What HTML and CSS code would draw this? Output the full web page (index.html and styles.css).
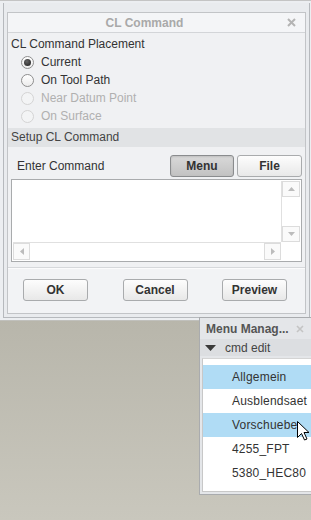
FILE: index.html
```html
<!DOCTYPE html>
<html>
<head>
<meta charset="utf-8">
<link rel="stylesheet" href="styles.css">
</head>
<body>
<div class="win">
  <div class="frame">
    <div class="dialog">
      <div class="titlebar">
        <span class="title">CL Command</span>
        <span class="close"><svg width="9" height="9" viewBox="0 0 9 9"><path d="M1 1L8 8M8 1L1 8" stroke="#b4b4b4" stroke-width="2"/></svg></span>
      </div>
      <div class="content">
        <div class="group-label">CL Command Placement</div>
        <div class="radios">
          <div class="radio checked"><span class="circle"></span>Current</div>
          <div class="radio"><span class="circle"></span>On Tool Path</div>
          <div class="radio disabled"><span class="circle"></span>Near Datum Point</div>
          <div class="radio disabled"><span class="circle"></span>On Surface</div>
        </div>
        <div class="section">Setup CL Command</div>
        <div class="cmd-row">
          <span class="cmd-label">Enter Command</span>
          <div class="cmd-btns">
            <button class="btn pressed">Menu</button>
            <button class="btn">File</button>
          </div>
        </div>
        <div class="textarea">
          <div class="ta-text"></div>
          <div class="vscroll">
            <div class="arrow-box"><svg width="7" height="4" viewBox="0 0 7 4"><path d="M0 4L3.5 0L7 4Z" fill="#bcbcbc"/></svg></div>
            <div class="track"></div>
            <div class="arrow-box"><svg width="7" height="4" viewBox="0 0 7 4"><path d="M0 0L3.5 4L7 0Z" fill="#bcbcbc"/></svg></div>
          </div>
          <div class="hscroll">
            <div class="arrow-box"><svg width="4" height="7" viewBox="0 0 4 7"><path d="M4 0L0 3.5L4 7Z" fill="#bcbcbc"/></svg></div>
            <div class="track"></div>
            <div class="arrow-box"><svg width="4" height="7" viewBox="0 0 4 7"><path d="M0 0L4 3.5L0 7Z" fill="#bcbcbc"/></svg></div>
          </div>
          <div class="corner"></div>
        </div>
      </div>
      <div class="footer">
        <button class="btn">OK</button>
        <button class="btn">Cancel</button>
        <button class="btn">Preview</button>
      </div>
    </div>
  </div>
</div>

<div class="menuwin">
  <div class="mw-title">
    <span>Menu Manag...</span>
    <svg width="8" height="8" viewBox="0 0 8 8"><path d="M1 1L7 7M7 1L1 7" stroke="#c4c4c4" stroke-width="1.6"/></svg>
  </div>
  <div class="mw-head">
    <svg width="11" height="6" viewBox="0 0 11 6"><path d="M0 0L11 0L5.5 6Z" fill="#3a3a3a"/></svg>
    <span>cmd edit</span>
  </div>
  <div class="mw-list">
    <div class="mw-item sel">Allgemein</div>
    <div class="mw-item">Ausblendsaet</div>
    <div class="mw-item sel">Vorschuebe</div>
    <div class="mw-item">4255_FPT</div>
    <div class="mw-item">5380_HEC80</div>
  </div>
</div>

<svg class="cursor" width="13" height="20" viewBox="0 0 13 20"><path d="M0.5 0.5L0.5 16.5L4.5 12.5L7.5 19L10 18L7 11.5L12 11.5Z" fill="#fff" stroke="#000" stroke-width="1" stroke-linejoin="miter"/></svg>
</body>
</html>
```

FILE: styles.css
```css
* { box-sizing: border-box; }
html, body { margin: 0; padding: 0; }
body {
  width: 311px;
  height: 520px;
  overflow: hidden;
  position: relative;
  font-family: "Liberation Sans", Arial, sans-serif;
  font-size: 12px;
  color: #333;
  background: linear-gradient(#b8b6ab 320px, #c9c7bd 520px);
}
.win {
  background: #eceef1;
  border-top: 1px solid #c4c4c4;
  border-bottom: 1px solid #c0c0bc;
  padding: 2px 1px 2px 3px;
}
.frame {
  border-left: 1px solid #b6b9bd;
  border-right: 1px solid #b6b9bd;
  border-bottom: 1px solid #b6b9bd;
  padding: 9px 3px 3px 3px;
  background: #e9ebee;
}
.dialog {
  border: 1px solid #c2c4c7;
  background: #f0f1f3;
  height: 302px;
  display: flex;
  flex-direction: column;
}
.titlebar {
  height: 20px;
  border-bottom: 1px solid #d3d5d8;
  background: #f4f5f7;
  display: flex;
  align-items: center;
}
.title {
  flex: 1;
  text-align: center;
  font-weight: bold;
  color: #a9a9a9;
  font-size: 12px;
  padding-left: 2px;
}
.close {
  width: 26px;
  display: flex;
  justify-content: center;
  padding-right: 2px;
}
.content {
  padding: 2px 3px 5px 3px;
}
.group-label {
  height: 18px;
  line-height: 18px;
  color: #333;
}
.radio {
  height: 18px;
  display: flex;
  align-items: center;
  color: #333;
}
.circle {
  width: 13px;
  height: 13px;
  border-radius: 50%;
  border: 1px solid #8e8e8e;
  background: linear-gradient(#ffffff, #ececec);
  margin-left: 10px;
  margin-right: 7px;
  display: flex;
  align-items: center;
  justify-content: center;
}
.radio.checked .circle::after {
  content: "";
  width: 7px;
  height: 7px;
  border-radius: 50%;
  background: radial-gradient(circle at 40% 35%, #666, #1a1a1a);
}
.radio.disabled { color: #b0b0b0; }
.radio.disabled .circle {
  border-color: #d4d4d4;
  background: #f3f4f5;
}
.section {
  margin: 3px -3px 0 -3px;
  height: 19px;
  line-height: 19px;
  padding-left: 3px;
  background: #e1e3e5;
  color: #444;
}
.cmd-row {
  margin-top: 8px;
  height: 22px;
  display: flex;
  align-items: center;
  justify-content: space-between;
}
.cmd-label {
  padding-left: 6px;
  color: #333;
}
.cmd-btns {
  display: flex;
  gap: 3px;
}
.btn {
  font-family: "Liberation Sans", Arial, sans-serif;
  font-size: 12px;
  font-weight: bold;
  color: #333;
  height: 22px;
  width: 65px;
  padding: 0;
  border: 1px solid #a9abad;
  border-radius: 3px;
  background: linear-gradient(#fdfdfd, #e8e8e8);
}
.btn.pressed {
  width: 64px;
  border-color: #8a8c8e;
  background: linear-gradient(#d9d9d9, #c2c2c2);
  box-shadow: inset 0 1px 2px rgba(0,0,0,0.12);
}
.textarea {
  margin-top: 2px;
  height: 83px;
  border: 1px solid #a9abad;
  background: #fff;
  display: grid;
  grid-template-columns: 1fr 19px;
  grid-template-rows: 1fr 18px;
  padding: 1px;
}
.vscroll {
  display: flex;
  flex-direction: column;
  border-left: 1px solid #e0e0e0;
}
.vscroll .arrow-box {
  height: 16px;
  border: 1px solid #dcdcdc;
  display: flex;
  align-items: center;
  justify-content: center;
  background: #fafafa;
}
.vscroll .track { flex: 1; }
.hscroll {
  display: flex;
  border-top: 1px solid #e0e0e0;
}
.hscroll .arrow-box {
  width: 17px;
  border: 1px solid #dcdcdc;
  display: flex;
  align-items: center;
  justify-content: center;
  background: #fafafa;
}
.hscroll .track { flex: 1; }
.corner { background: #fff; }
.footer {
  flex: 1;
  border-top: 1px solid #d6d8db;
  box-shadow: inset 0 1px 0 #fbfbfc;
  background: #f2f3f5;
  display: flex;
  align-items: flex-start;
  justify-content: space-between;
  padding: 11px 18px 0 15px;
}
.menuwin {
  position: absolute;
  left: 199px;
  top: 317px;
  width: 120px;
  height: 178px;
  background: #e4e6e9;
  border: 1px solid #a9abae;
  display: flex;
  flex-direction: column;
}
.mw-title {
  height: 21px;
  display: flex;
  align-items: center;
  padding-left: 6px;
  gap: 7px;
  font-weight: bold;
  color: #555;
  font-size: 12px;
  white-space: nowrap;
}
.mw-head {
  height: 17px;
  display: flex;
  align-items: center;
  background: #dcdee1;
  padding-left: 5px;
  gap: 9px;
  color: #444;
}
.mw-list {
  flex: 1;
  margin: 2px 0 2px 2px;
  background: #fff;
  border-left: 1px solid #c8c8c8;
  border-top: 1px solid #d4d4d4;
  border-bottom: 1px solid #c8c8c8;
  padding-top: 6px;
}
.mw-item {
  height: 24px;
  line-height: 24px;
  padding-left: 29px;
  white-space: nowrap;
  color: #333;
  letter-spacing: 0.2px;
}
.mw-item.sel { background: #b0dcf5; }
.cursor {
  position: absolute;
  left: 297px;
  top: 421px;
}
```
